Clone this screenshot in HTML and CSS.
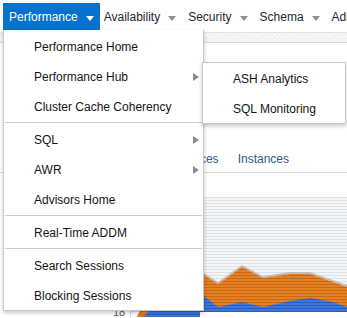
FILE: index.html
```html
<!DOCTYPE html>
<html>
<head>
<meta charset="utf-8">
<link rel="stylesheet" href="styles.css">
</head>
<body>
<div class="page">
  <nav class="nav">
    <div class="nav-item active">Performance<span class="caret white"></span></div>
    <div class="nav-item">Availability<span class="caret"></span></div>
    <div class="nav-item">Security<span class="caret"></span></div>
    <div class="nav-item">Schema<span class="caret"></span></div>
    <div class="nav-item">Administration<span class="caret"></span></div>
  </nav>
  <div class="band"></div>
  <div class="content">
    <div class="tabs">
      <span class="tab">Summary</span>
      <span class="tab">Services</span>
      <span class="tab">Instances</span>
    </div>
    <svg class="chart" width="347" height="128" viewBox="0 0 347 128">
      <defs>
        <pattern id="grid" width="4" height="3" patternUnits="userSpaceOnUse">
          <rect width="4" height="3" fill="#f4f5f7"/>
          <rect y="2" width="4" height="1" fill="#dde1e6"/>
        </pattern>
        <pattern id="orange" width="4" height="3" patternUnits="userSpaceOnUse">
          <rect width="4" height="3" fill="#e7811f"/>
          <rect y="2" width="4" height="1" fill="#c8661a"/>
        </pattern>
        <pattern id="blue" width="4" height="3" patternUnits="userSpaceOnUse">
          <rect width="4" height="3" fill="#3a78e0"/>
          <rect y="2" width="4" height="1" fill="#2a5cc0"/>
        </pattern>
      </defs>
      <rect x="130" y="8" width="217" height="115" fill="url(#grid)"/>
      <polygon fill="#bdbdbd" points="137,128 150,100 204,84 218,93 242,76 263,87 290,83 310,83 333,91 347,96 347,98 333,93 310,85 290,85 263,89 242,78 218,95 204,86 150,102 139,128"/>
      <polygon fill="url(#orange)" points="137,128 150,102 204,86 218,95 242,78 263,89 290,85 310,85 333,93 347,98 347,123 200,123 200,128"/>
      <polygon fill="url(#blue)" points="143,128 160,112 204,107 218,118 242,113 263,118 290,112 310,109 333,113 347,118 347,123 200,123 200,128"/>
      <text x="113" y="127" class="axis">18</text>
      <rect x="130" y="119" width="1" height="9" fill="#c9ced4"/>
    </svg>
  </div>

  <div class="menu">
    <div class="menu-item">Performance Home</div>
    <div class="menu-item">Performance Hub<span class="arrow"></span></div>
    <div class="menu-item">Cluster Cache Coherency</div>
    <div class="sep"></div>
    <div class="menu-item">SQL<span class="arrow"></span></div>
    <div class="menu-item">AWR<span class="arrow"></span></div>
    <div class="menu-item">Advisors Home</div>
    <div class="sep"></div>
    <div class="menu-item">Real-Time ADDM</div>
    <div class="sep"></div>
    <div class="menu-item">Search Sessions</div>
    <div class="menu-item">Blocking Sessions</div>
  </div>

  <div class="submenu">
    <div class="menu-item">ASH Analytics</div>
    <div class="menu-item">SQL Monitoring</div>
  </div>
</div>
</body>
</html>
```

FILE: styles.css
```css
* { box-sizing: border-box; }
html, body { margin: 0; padding: 0; }
body {
  width: 347px;
  height: 318px;
  overflow: hidden;
  background: #ffffff;
  font-family: "Liberation Sans", Arial, sans-serif;
  font-size: 12px;
  color: #1a1a1a;
}
.page { position: relative; width: 347px; height: 318px; overflow: hidden; }

.nav {
  display: flex;
  align-items: flex-end;
  height: 30px;
  padding-left: 3px;
  white-space: nowrap;
  background: #ffffff;
  overflow: hidden;
}
.nav-item {
  display: flex;
  align-items: center;
  height: 27px;
  margin-right: 12px;
  padding-top: 1px;
  color: #1f1f2e;
  flex: none;
}
.nav-item.active {
  background: #0572ce;
  color: #ffffff;
  padding: 1px 6px 0 6px;
  margin-right: 4px;
}
.caret {
  display: inline-block;
  width: 0; height: 0;
  margin-left: 8px;
  margin-top: 2px;
  border-left: 4.5px solid transparent;
  border-right: 4.5px solid transparent;
  border-top: 5px solid #8f8f8f;
}
.caret.white { border-top-color: #ffffff; margin-left: 8px; border-left-width: 4px; border-right-width: 4px; }

.band {
  height: 11px;
  margin-top: 2px;
  border-top: 1px solid #dfe3e7;
  border-bottom: 1px solid #d3d9df;
  background: repeating-linear-gradient(135deg, #f6f7f8 0 2px, #eceef0 2px 3px);
}

.content { position: relative; }
.tabs {
  display: flex;
  justify-content: flex-end;
  gap: 19px;
  height: 31px;
  margin-top: 99px;
  padding-right: 58px;
  border-bottom: 1px solid #d6dce2;
  color: #2f5a92;
  font-size: 12px;
  line-height: 34px;
  white-space: nowrap;
}
.tab:first-child { display: none; }
.chart { display: block; margin-top: 16px; }
.axis { font-family: "Liberation Sans", Arial, sans-serif; font-size: 11px; fill: #555; }

.menu {
  position: absolute;
  left: 3px;
  top: 30px;
  width: 201px;
  padding: 1px 0 0 0;
  background: #ffffff;
  border: 1px solid #c9c9c9;
  border-top: none;
  box-shadow: 0 2px 4px rgba(0,0,0,0.22);
}
.menu-item {
  position: relative;
  height: 30px;
  line-height: 33px;
  padding-left: 30px;
  color: #141414;
  white-space: nowrap;
}
.sep {
  height: 1px;
  margin: 1px;
  background: #c9ced4;
}
.arrow {
  position: absolute;
  right: 4px;
  top: 12px;
  width: 0; height: 0;
  border-top: 4px solid transparent;
  border-bottom: 4px solid transparent;
  border-left: 6px solid #8c8c8c;
}
.submenu {
  position: absolute;
  left: 202px;
  top: 62px;
  width: 144px;
  background: #ffffff;
  border: 1px solid #c9c9c9;
  box-shadow: 0 2px 4px rgba(0,0,0,0.22);
}
```
